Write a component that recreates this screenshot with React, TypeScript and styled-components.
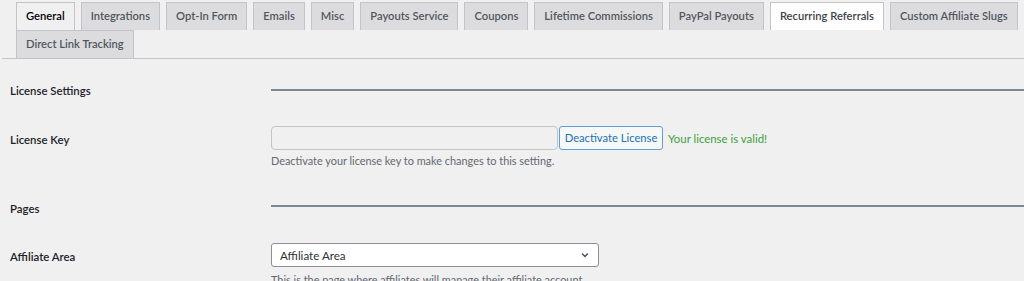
import styled, { createGlobalStyle } from "styled-components";

const GlobalStyle = createGlobalStyle`
    html, body {
        margin: 0;
        padding: 0;
        background: #f0f0f1;
    }
    body {
        font-family: "Lato", "Open Sans", sans-serif;
        font-size: 11px;
        color: #3c434a;
        overflow: hidden;
    }
`

const Page = styled.div`
    width: 1024px;
    height: 281px;
    overflow: hidden;
`

const TabBar = styled.nav`
    display: flex;
    flex-wrap: wrap;
    padding: 2px 0 0 8px;
    margin-left: 2px;
    border-bottom: 1px solid #c3c4c7;
`

const Tab = styled.a<{ $active?: boolean; $hover?: boolean }>`
    display: block;
    margin-left: 6px;
    padding: 4px 9px 5px;
    line-height: 18px;
    font-size: 11.2px;
    font-weight: 600;
    text-decoration: none;
    white-space: nowrap;
    border: 1px solid #c3c4c7;
    border-bottom: none;
    background: ${p => p.$active ? "#f0f0f1" : p.$hover ? "#ffffff" : "#dcdcde"};
    color: ${p => p.$active ? "#000" : p.$hover ? "#3c434a" : "#50575e"};
`

const Row = styled.div<{ $top: number; $bottom: number }>`
    display: grid;
    grid-template-columns: 261px 1fr;
    padding: 0 0 ${p => p.$bottom}px 10px;
    padding-top: ${p => p.$top}px;
`

const Label = styled.div<{ $offset: number }>`
    padding-top: ${p => p.$offset}px;
    font-weight: 600;
    font-size: 11.4px;
    line-height: 16px;
    color: #1d2327;
`

const Field = styled.div<{ $offset: number }>`
    padding-top: ${p => p.$offset}px;
`

const Rule = styled.hr`
    margin: 0;
    border: 0;
    border-top: 2px solid #7d8893;
    height: 0;
`

const Inline = styled.div`
    display: flex;
    align-items: center;
`

const KeyInput = styled.input`
    box-sizing: border-box;
    width: 287px;
    height: 24px;
    margin: 0;
    border: 1px solid #c3c4c7;
    border-radius: 4px;
    background: #f0f0f1;
    font: inherit;
`

const Button = styled.button`
    box-sizing: border-box;
    width: 104px;
    height: 24px;
    margin-left: 1px;
    padding: 0;
    border: 1px solid #5f9fd2;
    border-radius: 3px;
    background: #f6f7f7;
    color: #2271b1;
    font-family: inherit;
    font-size: 11.2px;
    line-height: 22px;
    white-space: nowrap;
`

const Valid = styled.span`
    margin-left: 5px;
    color: #3f9e3f;
    font-size: 11.4px;
`

const Description = styled.p<{ $gap: number }>`
    margin: ${p => p.$gap}px 0 0;
    line-height: 16px;
    font-size: 10.9px;
    color: #646970;
    white-space: nowrap;
`

const Select = styled.div`
    box-sizing: border-box;
    width: 328px;
    height: 24px;
    display: flex;
    align-items: center;
    justify-content: space-between;
    padding: 0 8px 0 8px;
    border: 1px solid #8c8f94;
    border-radius: 3px;
    background: #fff;
    color: #2c3338;
    font-size: 11.6px;
`

const Chevron = () => (
    <svg width="10" height="10" viewBox="0 0 10 10">
        <path d="M2 3.5 L5 6.5 L8 3.5" fill="none" stroke="#50575e" strokeWidth="1.5" />
    </svg>
)

export default function App() {
    const tabs = [
        "General",
        "Integrations",
        "Opt-In Form",
        "Emails",
        "Misc",
        "Payouts Service",
        "Coupons",
        "Lifetime Commissions",
        "PayPal Payouts",
        "Recurring Referrals",
        "Custom Affiliate Slugs",
        "Direct Link Tracking",
    ]

    return (
        <Page>
            <GlobalStyle />
            <TabBar>
                {tabs.map(tab => (
                    <Tab
                        key={tab}
                        href="#"
                        $active={tab === "General"}
                        $hover={tab === "Recurring Referrals"}
                    >
                        {tab}
                    </Tab>
                ))}
            </TabBar>

            <Row $top={24} $bottom={12}>
                <Label $offset={0}>License Settings</Label>
                <Field $offset={6}>
                    <Rule />
                </Field>
            </Row>

            <Row $top={0} $bottom={15}>
                <Label $offset={21}>License Key</Label>
                <Field $offset={15}>
                    <Inline>
                        <KeyInput type="text" readOnly />
                        <Button>Deactivate License</Button>
                        <Valid>Your license is valid!</Valid>
                    </Inline>
                    <Description $gap={3}>Deactivate your license key to make changes to this setting.</Description>
                </Field>
            </Row>

            <Row $top={17} $bottom={11}>
                <Label $offset={0}>Pages</Label>
                <Field $offset={4}>
                    <Rule />
                </Field>
            </Row>

            <Row $top={0} $bottom={0}>
                <Label $offset={21}>Affiliate Area</Label>
                <Field $offset={15}>
                    <Select>
                        <span>Affiliate Area</span>
                        <Chevron />
                    </Select>
                    <Description $gap={5}>This is the page where affiliates will manage their affiliate account.</Description>
                </Field>
            </Row>
        </Page>
    )
}
